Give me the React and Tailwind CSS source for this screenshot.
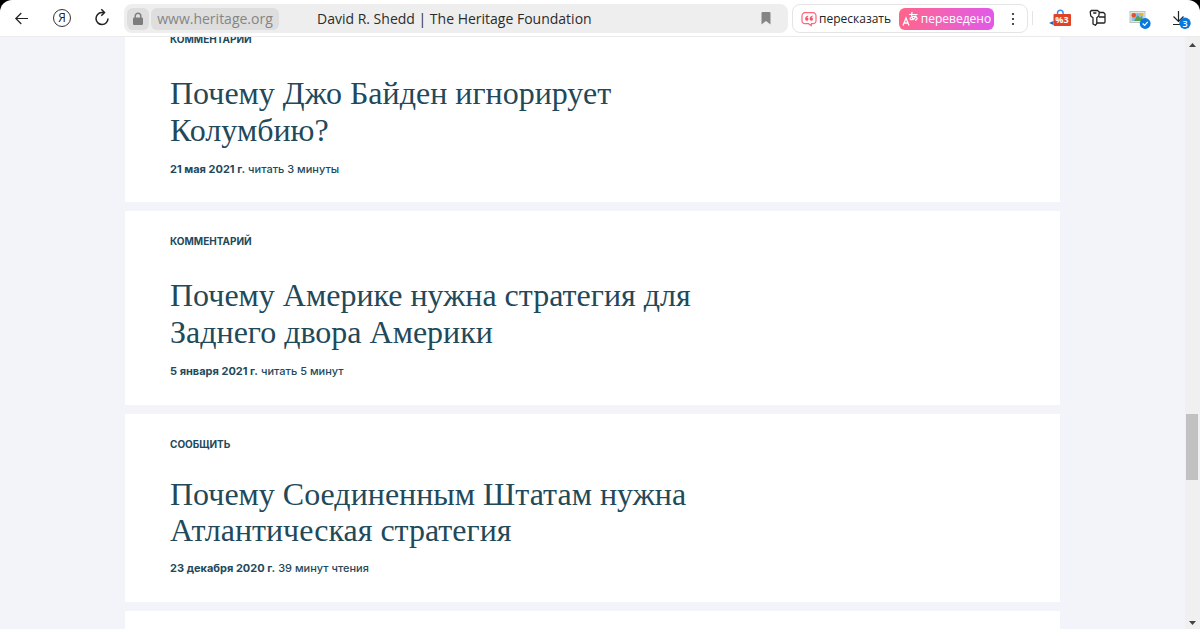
import React from "react";

const articles = [
  {
    kind: "КОММЕНТАРИЙ",
    title: ["Почему Джо Байден игнорирует", "Колумбию?"],
    date: "21 мая 2021 г.",
    read: "читать 3 минуты",
    spacing: "pb-[25px]",
  },
  {
    kind: "КОММЕНТАРИЙ",
    title: ["Почему Америке нужна стратегия для", "Заднего двора Америки"],
    date: "5 января 2021 г.",
    read: "читать 5 минут",
    spacing: "pb-[26px]",
  },
  {
    kind: "СООБЩИТЬ",
    title: ["Почему Соединенным Штатам нужна", "Атлантическая стратегия"],
    date: "23 декабря 2020 г.",
    read: "39 минут чтения",
    spacing: "pb-[26px]",
    compact: true,
  },
];

function BackIcon() {
  return (
    <svg width="20" height="20" viewBox="0 0 20 20" fill="none" stroke="#222" strokeWidth="1.2" aria-hidden="true">
      <path d="M16 10.5H4M9.3 5 3.800 10.500l5.500 5.500" />
    </svg>
  );
}

function ReloadIcon() {
  return (
    <svg width="20" height="20" viewBox="0 0 20 20" fill="none" stroke="#222" strokeWidth="1.5" aria-hidden="true">
      <path d="M12 4.500H9.700a6 6 0 1 0 6.300 6" />
      <path d="m9.300 1.300 3.200 3.200-3.200 3.200" />
    </svg>
  );
}

function LockIcon() {
  return (
    <svg width="12" height="14" viewBox="0 0 12 14" aria-hidden="true">
      <path d="M3.2 6V4a2.8 2.8 0 0 1 5.6 0v2" fill="none" stroke="#7d7d7d" strokeWidth="1.4" />
      <rect x="1" y="5.5" width="10" height="7.5" rx="1.3" fill="#7d7d7d" />
    </svg>
  );
}

function RetellIcon() {
  return (
    <svg width="16" height="16" viewBox="0 0 16 16" aria-hidden="true">
      <path
        d="M4 1.700h8a3 3 0 0 1 3 3v5a3 3 0 0 1-3 3h-1.500l-.3 2-2.700-2H4a3 3 0 0 1-3-3v-5a3 3 0 0 1 3-3Z"
        fill="none"
        stroke="#ff6478"
        strokeWidth="1.2"
      />
      <path
        d="M7.200 4.600C5.300 5 4.100 6.200 4.100 8.100a1.700 1.700 0 1 0 1.900-1.700c.1-.5.5-.8 1.200-1ZM11.700 4.600C9.800 5 8.600 6.200 8.600 8.100a1.700 1.700 0 1 0 1.900-1.700c.1-.5.5-.8 1.200-1Z"
        fill="#ff5068"
      />
    </svg>
  );
}

function TranslateIcon() {
  return (
    <svg width="17" height="16" viewBox="0 0 17 16" fill="none" stroke="#fff" strokeWidth="1.3" aria-hidden="true">
      <path d="M1 14.500 4 7l3 7.500M2 12h4" />
      <path d="M7 3.500h8.500M10 1c-.6 3-.3 5.500.8 7M14 4.500c-1 2.900-3.200 4.500-5 4.100C6.800 8 8.800 5.300 12 5.300c3.600 0 4.300 3.300 1 4" strokeWidth="1.2" />
    </svg>
  );
}

function BagIcon() {
  return (
    <svg width="24" height="20" viewBox="0 0 24 20" aria-hidden="true">
      <path d="M8.500 8V5a2.800 2.800 0 0 1 5.600 0V8" fill="none" stroke="#3d8ee8" strokeWidth="1.500" />
      <path d="m0 15 4.500-2v4Z" fill="#1766cf" />
      <rect x="4.500" y="6" width="17.500" height="12" rx="1" fill="#e04427" />
      <text x="13" y="15.300" textAnchor="middle" fontSize="9" fontWeight="700" fontFamily="Open Sans, sans-serif" fill="#fff">
        %3
      </text>
    </svg>
  );
}

function KeyIcon() {
  return (
    <svg width="18" height="18" viewBox="0 0 18 18" fill="none" stroke="#222" strokeWidth="1.300" strokeLinejoin="round" aria-hidden="true">
      <path d="M2.300 1.500h6.200L10.300 3l-.5 4-2 1.700v5.800L6.300 16.300 4 15V8.700L1.800 7 1.200 3Z" />
      <path d="M10.300 3.500h4.200L16 5v8a1 1 0 0 1-1 1H8M10 8h6M4.200 4h3.200" />
    </svg>
  );
}

function GalleryIcon() {
  return (
    <svg width="22" height="22" viewBox="0 0 22 22" aria-hidden="true">
      <rect x="1" y="4.500" width="15" height="11" fill="#e9e7dd" stroke="#b7c3c5" />
      <rect x="2.500" y="6" width="12" height="8" fill="#8bbfe8" />
      <path d="m5 14 3.500-6 2.500 3 1.500-2 2 5Z" fill="#5b9e4d" />
      <circle cx="4.800" cy="8.200" r="2.200" fill="#e2532b" />
      <circle cx="12.500" cy="7.500" r="1.500" fill="#f0b429" />
      <circle cx="16.200" cy="16.500" r="5.400" fill="#0878dc" />
      <path d="m13.700 16.500 1.900 1.900 3.200-3.500" fill="none" stroke="#fff" strokeWidth="1.300" />
    </svg>
  );
}

function DownloadIcon() {
  return (
    <svg width="22" height="22" viewBox="0 0 22 22" aria-hidden="true">
      <path d="M7.500 4v10.500M2.500 9.500l5 5 5-5M2 17.500h7" fill="none" stroke="#222" strokeWidth="1.200" />
      <circle cx="14" cy="16.200" r="5.700" fill="#0878dc" />
      <text x="14" y="19.500" textAnchor="middle" fontSize="9" fontWeight="600" fontFamily="Open Sans, sans-serif" fill="#fff">
        3
      </text>
    </svg>
  );
}

function Toolbar() {
  return (
    <header className="flex h-[37px] shrink-0 items-start rounded-t-xl border-b border-[#ebebeb] bg-white pt-1 font-['Open_Sans','Noto_Sans',sans-serif]">
      <nav className="flex h-7 w-[124px] shrink-0 items-center gap-5 pl-3" aria-label="Навигация">
        <button aria-label="Назад"><BackIcon /></button>
        <button
          aria-label="Яндекс"
          className="mx-px flex h-[18px] w-[18px] items-center justify-center rounded-full border border-[#333] text-xs leading-none font-medium text-[#222]"
        >
          Я
        </button>
        <button aria-label="Обновить"><ReloadIcon /></button>
      </nav>
      <div className="flex h-[29px] min-w-0 flex-1 items-center rounded-lg bg-[#eee] px-[3px]">
        <button aria-label="Сведения о сайте" className="flex h-[22px] w-[22px] shrink-0 items-center justify-center rounded-md bg-[#dedede]">
          <LockIcon />
        </button>
        <button className="ml-0.5 h-[22px] w-32 shrink-0 rounded-md bg-[#dedede] text-sm leading-[22px] text-[#858585]">
          www.heritage.org
        </button>
        <span className="ml-[38px] min-w-0 flex-1 truncate text-sm text-[#2c2c2c]">
          David R. Shedd | The Heritage Foundation
        </span>
        <button aria-label="Добавить в закладки" className="mr-3.5">
          <svg width="10" height="13" viewBox="0 0 10 13" aria-hidden="true">
            <path d="M1.500 0h7a1 1 0 0 1 1 1v11.500L5 9 .5 12.500V1a1 1 0 0 1 1-1Z" fill="#858585" />
          </svg>
        </button>
      </div>
      <div className="ml-1 flex h-[29px] w-[236px] shrink-0 items-center rounded-lg border border-[#e4e4e4] pl-2 text-xs text-[#222]">
        <button className="flex items-center gap-0.5">
          <RetellIcon />
          пересказать
        </button>
        <button className="ml-auto flex h-[22px] w-[95px] items-center justify-center gap-0.5 rounded-md bg-linear-to-r from-[#ff6488] to-[#e257ea] text-white">
          <TranslateIcon />
          переведено
        </button>
        <button aria-label="Ещё" className="flex w-[33px] justify-center pl-1">
          <svg width="4" height="14" viewBox="0 0 4 14" fill="#222" aria-hidden="true">
            <circle cx="2" cy="2" r="1.100" />
            <circle cx="2" cy="7" r="1.100" />
            <circle cx="2" cy="12" r="1.100" />
          </svg>
        </button>
      </div>
      <div className="ml-1 flex h-7 w-[168px] shrink-0 items-center gap-4">
        <span className="h-3.5 w-px bg-[#e4e4e4]" />
        <button aria-label="Скидки"><BagIcon /></button>
        <button aria-label="Пароли"><KeyIcon /></button>
        <button aria-label="Картинки" className="ml-1.5"><GalleryIcon /></button>
        <button aria-label="Загрузки" className="ml-1"><DownloadIcon /></button>
      </div>
    </header>
  );
}

function Article({ kind, title, date, read, spacing, compact }) {
  return (
    <article className={`bg-white px-[45px] pt-[22px] ${spacing}`}>
      <p className="text-[10px] leading-4 font-bold">{kind}</p>
      <h2
        className={
          compact
            ? "mt-6 font-['Liberation_Serif',serif] text-[32px] leading-9"
            : "mt-7 font-['Liberation_Serif',serif] text-[32px] leading-[37px]"
        }
      >
        <a href="#article">
          {title[0]}
          <br />
          {title[1]}
        </a>
      </h2>
      <p className="mt-3 text-[11px] leading-4 font-medium">
        <strong className="font-bold">{date}</strong> {read}
      </p>
    </article>
  );
}

export default function App() {
  return (
    <div className="flex h-screen flex-col overflow-hidden bg-black">
      <Toolbar />
      <div className="flex min-h-0 flex-1 bg-[#f2f4f9]">
        <main className="min-w-0 flex-1 overflow-hidden px-[125px] font-['Inter',sans-serif] text-[#22495a]">
          <div className="-mt-7 flex flex-col gap-[9px]">
            {articles.map((a) => (
              <Article key={a.date} {...a} />
            ))}
            <div className="h-48 bg-white" />
          </div>
        </main>
        <div className="flex w-[15px] shrink-0 flex-col items-center bg-[#f0f0f0] pt-1.5 pr-px pb-1" aria-hidden="true">
          <svg width="7" height="5" viewBox="0 0 7 5" fill="#444"><path d="M3.500 0 7 4H0Z" /></svg>
          <div className="grow-[366]" />
          <div className="h-[66px] w-3 bg-[#c1c1c1]" />
          <div className="grow-[140]" />
          <svg width="7" height="5" viewBox="0 0 7 5" fill="#444"><path d="M3.500 5 7 1H0Z" /></svg>
        </div>
      </div>
    </div>
  );
}
